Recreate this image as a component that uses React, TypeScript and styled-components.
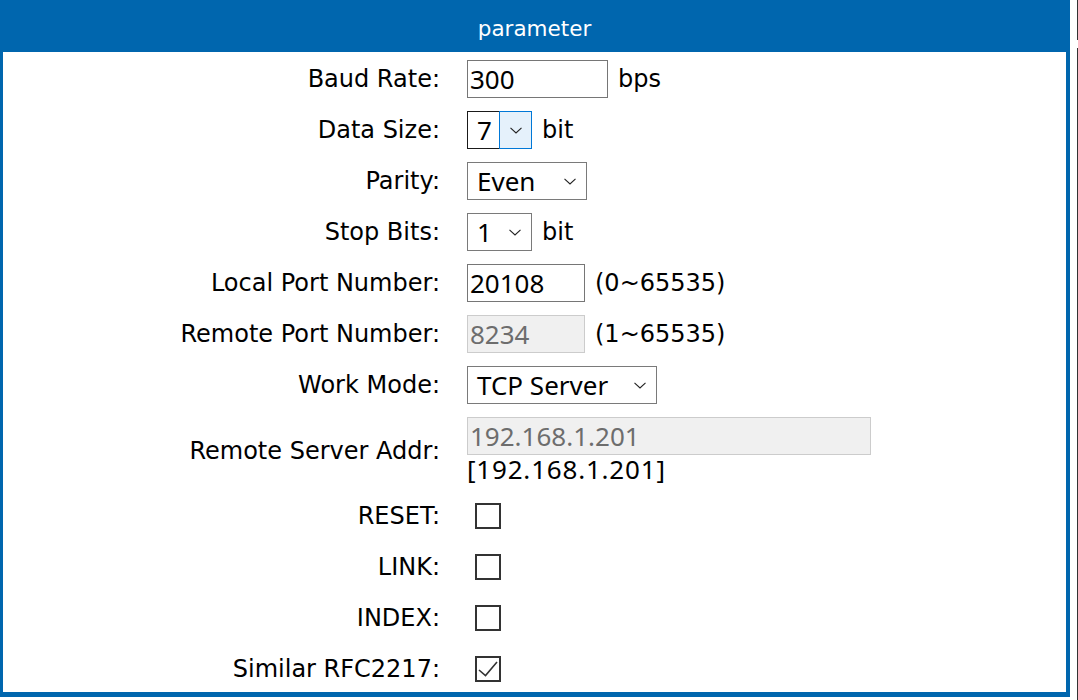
import { FC } from "react";
import styled, { createGlobalStyle } from "styled-components";

const BLUE = "#0066ae";

const GlobalStyle = createGlobalStyle`
    body {
        margin: 0;
        background: #fff;
    }
`;

const Page = styled.div`
    display: flex;
    width: 1078px;
    height: 700px;
`;

const Panel = styled.section`
    width: 1070px;
    height: 697px;
    box-sizing: border-box;
    border: solid ${BLUE};
    border-width: 0 4px 5px 3px;
    display: flex;
    flex-direction: column;
    font-family: "DejaVu Sans", Verdana, sans-serif;
    color: #000;
`;

const EdgeRule = styled.div`
    margin-left: 7px;
    width: 1px;
    height: 700px;
    background: linear-gradient(to bottom, #333 0 40px, transparent 40px 48px, #333 48px);
`;

const Header = styled.h2`
    margin: 0;
    height: 52px;
    flex: none;
    background: ${BLUE};
    color: #fff;
    font-size: 21.5px;
    font-weight: normal;
    display: flex;
    align-items: center;
    justify-content: center;
    padding-top: 5px;
    box-sizing: border-box;
`;

const Form = styled.div`
    display: grid;
    grid-template-columns: 437px 1fr;
    column-gap: 27px;
    row-gap: 13px;
    padding-top: 8px;
    align-items: center;
`;

const Label = styled.label`
    text-align: right;
    font-size: 24px;
    line-height: 28px;
`;

const Field = styled.div<{ $column?: boolean }>`
    display: flex;
    flex-direction: ${p => (p.$column ? "column" : "row")};
    align-items: ${p => (p.$column ? "flex-start" : "center")};
    gap: ${p => (p.$column ? "0" : "10px")};
    min-height: 38px;
`;

const Unit = styled.span`
    font-size: 24px;
    line-height: 28px;
`;

const TextInput = styled.input<{ $width: number }>`
    width: ${p => p.$width}px;
    height: 38px;
    box-sizing: border-box;
    border: 1px solid #767676;
    padding: 0 2px;
    margin: 0;
    font-family: "Noto Sans", "Open Sans", sans-serif;
    font-size: 26px;
    color: #000;
    background: #fff;
    outline: none;

    &:disabled {
        background: #f0f0f0;
        border-color: #cccccc;
        color: #6d6d6d;
    }
`;

const AddrEcho = styled.span`
    font-family: "Noto Sans", "Open Sans", sans-serif;
    font-size: 26px;
    letter-spacing: 0.8px;
    line-height: 29px;
`;

const SelectBox = styled.div<{ $width: number }>`
    width: ${p => p.$width}px;
    height: 38px;
    box-sizing: border-box;
    border: 1px solid #7a7a7a;
    background: #fff;
    display: flex;
    align-items: center;
    justify-content: space-between;
    padding: 0 10px 0 9px;
    font-family: "Noto Sans", "Open Sans", sans-serif;
    font-size: 26px;
    cursor: default;
`;

const FocusSelect = styled.div`
    display: flex;
    height: 38px;
    font-family: "Noto Sans", "Open Sans", sans-serif;
    font-size: 26px;
`;

const FocusValue = styled.span`
    width: 32px;
    box-sizing: border-box;
    border: 1px solid #1a1a1a;
    border-right: none;
    display: flex;
    align-items: center;
    padding-left: 9px;
`;

const FocusButton = styled.span`
    width: 33px;
    box-sizing: border-box;
    border: 1px solid #0078d7;
    background: #e5f1fb;
    display: flex;
    align-items: center;
    justify-content: center;
`;

const Box = styled.span`
    width: 26px;
    height: 26px;
    box-sizing: border-box;
    border: 2px solid #333;
    margin-left: 8px;
    display: flex;
`;

const Chevron: FC = () => (
    <svg width="12" height="7" viewBox="0 0 12 7">
        <path d="M0.5 0.8 L6 6 L11.5 0.8" fill="none" stroke="#222" strokeWidth="1.1" />
    </svg>
);

const Select: FC<{ value: string; width: number }> = ({ value, width }) => (
    <SelectBox $width={width}>
        <span>{value}</span>
        <Chevron />
    </SelectBox>
);

const Checkbox: FC<{ checked?: boolean }> = ({ checked }) => (
    <Box>
        {checked && (
            <svg width="22" height="22" viewBox="0 0 22 22">
                <path d="M2 12 L8.5 17.5 L20 4" fill="none" stroke="#333" strokeWidth="1.6" />
            </svg>
        )}
    </Box>
);

const App: FC = () => (
    <Page>
        <GlobalStyle />
        <Panel>
            <Header>parameter</Header>
            <Form>
                <Label>Baud Rate:</Label>
                <Field>
                    <TextInput $width={141} defaultValue="300" />
                    <Unit>bps</Unit>
                </Field>

                <Label>Data Size:</Label>
                <Field>
                    <FocusSelect>
                        <FocusValue>7</FocusValue>
                        <FocusButton><Chevron /></FocusButton>
                    </FocusSelect>
                    <Unit>bit</Unit>
                </Field>

                <Label>Parity:</Label>
                <Field>
                    <Select value="Even" width={120} />
                </Field>

                <Label>Stop Bits:</Label>
                <Field>
                    <Select value="1" width={65} />
                    <Unit>bit</Unit>
                </Field>

                <Label>Local Port Number:</Label>
                <Field>
                    <TextInput $width={118} defaultValue="20108" />
                    <Unit>(0~65535)</Unit>
                </Field>

                <Label>Remote Port Number:</Label>
                <Field>
                    <TextInput $width={118} defaultValue="8234" disabled />
                    <Unit>(1~65535)</Unit>
                </Field>

                <Label>Work Mode:</Label>
                <Field>
                    <Select value="TCP Server" width={190} />
                </Field>

                <Label>Remote Server Addr:</Label>
                <Field $column>
                    <TextInput $width={404} defaultValue="192.168.1.201" disabled />
                    <AddrEcho>[192.168.1.201]</AddrEcho>
                </Field>

                <Label>RESET:</Label>
                <Field><Checkbox /></Field>

                <Label>LINK:</Label>
                <Field><Checkbox /></Field>

                <Label>INDEX:</Label>
                <Field><Checkbox /></Field>

                <Label>Similar RFC2217:</Label>
                <Field><Checkbox checked /></Field>
            </Form>
        </Panel>
        <EdgeRule />
    </Page>
);

export default App;
